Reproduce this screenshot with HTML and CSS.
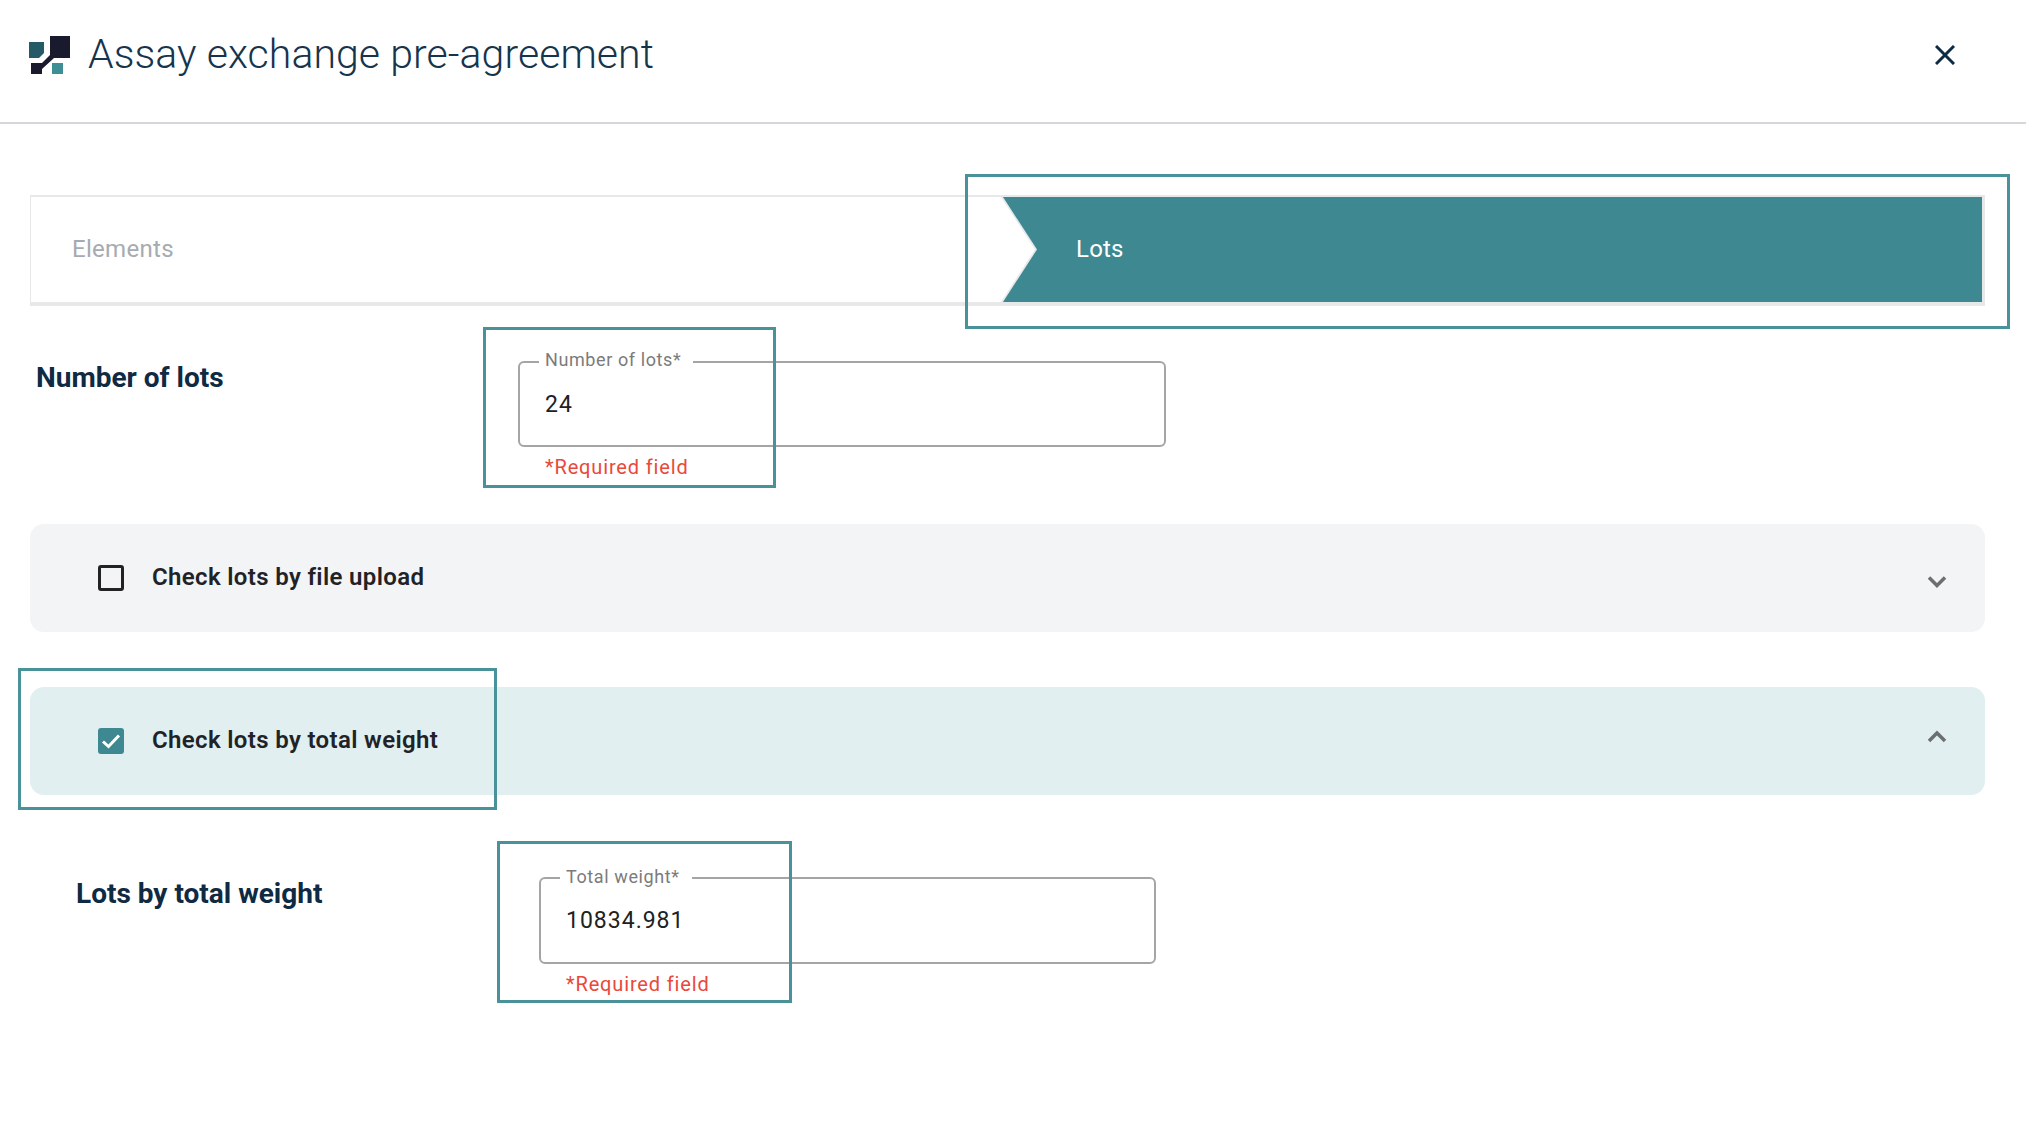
FILE: index.html
```html
<!DOCTYPE html>
<html lang="en">
<head>
<meta charset="utf-8">
<title>Assay exchange pre-agreement</title>
<link rel="stylesheet" href="styles.css">
</head>
<body>
<div class="page">
  <header class="header">
    <div class="brand">
      <svg class="logo" viewBox="0 0 41 38" width="41" height="38" aria-hidden="true">
        <path fill="#1a1a2e" d="M21 0H41V22H25L13 33V38H2V27H13L21 19Z"/>
        <path fill="#245b67" d="M0 6H15V17L10 22H0Z"/>
        <rect fill="#3e8e95" x="23" y="27" width="11" height="11"/>
      </svg>
      <h1 class="title">Assay exchange pre-agreement</h1>
    </div>
    <svg class="close" viewBox="0 0 20 20" width="20" height="20" aria-hidden="true">
      <path d="M1 1L19 19M19 1L1 19"/>
    </svg>
  </header>
  <main class="main">
    <div class="stepper">
      <div class="step">Elements</div>
      <div class="step step-active"><span class="step-text">Lots</span></div>
    </div>

    <section class="form-row form-row-lots">
      <h2 class="row-label">Number of lots</h2>
      <div class="field">
        <fieldset class="outline">
          <legend class="legend">Number of lots*</legend>
          <div class="value">24</div>
        </fieldset>
        <p class="error">*Required field</p>
      </div>
    </section>

    <div class="accordion">
      <span class="checkbox"></span>
      <span class="acc-title">Check lots by file upload</span>
      <svg class="chevron chevron-down" viewBox="0 0 20 14" width="20" height="14" aria-hidden="true"><path d="M2 2.5L10 10.5L18 2.5"/></svg>
    </div>

    <div class="accordion accordion-open">
      <span class="checkbox checkbox-on">
        <svg viewBox="0 0 26 26" width="26" height="26" aria-hidden="true"><path d="M5 13.5L10.5 18.5L21 7.5"/></svg>
      </span>
      <span class="acc-title">Check lots by total weight</span>
      <svg class="chevron chevron-up" viewBox="0 0 20 14" width="20" height="14" aria-hidden="true"><path d="M2 11L10 3L18 11"/></svg>
    </div>

    <section class="form-row form-row-weight">
      <h2 class="row-label">Lots by total weight</h2>
      <div class="field">
        <fieldset class="outline">
          <legend class="legend">Total weight*</legend>
          <div class="value">10834.981</div>
        </fieldset>
        <p class="error">*Required field</p>
      </div>
    </section>
  </main>

  <div class="mark mark-step"></div>
  <div class="mark mark-lots"></div>
  <div class="mark mark-check"></div>
  <div class="mark mark-weight"></div>
</div>
</body>
</html>
```
FILE: styles.css
```css
* { box-sizing: border-box; }
html, body { margin: 0; padding: 0; background: #fff; }
body { font-family: Roboto, "Liberation Sans", sans-serif; color: #0f2a43; }
.page { position: relative; width: 2026px; height: 1126px; overflow: hidden; }

.header {
  height: 124px;
  padding: 0 71px 12px 29px;
  border-bottom: 2px solid #d5d7da;
  display: flex;
  align-items: center;
  justify-content: space-between;
}
.brand { display: flex; align-items: center; gap: 18px; }
.logo { display: block; }
.title { margin: -2px 0 0; font-size: 41px; font-weight: 300; line-height: 48px; letter-spacing: 0.06px; color: #17344d; }
.close { display: block; }
.close path { fill: none; stroke: #0f2a43; stroke-width: 3; }

.main { padding: 71px 41px 0 30px; }

.stepper {
  height: 111px;
  display: flex;
  border-style: solid;
  border-color: #e6e8ea;
  border-width: 2px 3px 4px 1px;
}
.step {
  flex: 1 1 0;
  display: flex;
  align-items: center;
  padding: 0 0 2px 41px;
  font-size: 24px;
  letter-spacing: 0.3px;
  color: #a6abb1;
}
.step-active {
  position: relative;
  flex: 0 0 981px;
  padding-left: 75px;
  background: #e6e8ea;
  color: #fff;
  letter-spacing: 0.2px;
  clip-path: polygon(0 0, 100% 0, 100% 100%, 0 100%, 34px 50%);
}
.step-active::before {
  content: "";
  position: absolute;
  inset: 0 0 0 2px;
  background: #3e8891;
  clip-path: polygon(0 0, 100% 0, 100% 100%, 0 100%, 34px 50%);
}
.step-text { position: relative; }

.form-row { display: grid; align-items: start; }
.form-row-lots {
  margin-top: 44px;
  padding-left: 6px;
  grid-template-columns: 482px 648px;
}
.form-row-weight {
  margin-top: 72px;
  padding-left: 46px;
  grid-template-columns: 463px 617px;
}
.row-label {
  margin: 0;
  padding-top: 13px;
  font-size: 28px;
  line-height: 30px;
  font-weight: 700;
  color: #0f2a43;
}
.form-row-weight .row-label { padding-top: 12px; }

.outline {
  margin: 0;
  padding: 0 0 0 19px;
  height: 97px;
  border: 2px solid #a5a5a5;
  border-radius: 6px;
}
.legend {
  padding: 0 12px 4px 6px;
  font-size: 18px;
  line-height: 20px;
  letter-spacing: 0.6px;
  color: #7b7b7b;
}
.form-row-weight .legend { padding-bottom: 2px; }
.value {
  font-size: 23px;
  line-height: 26px;
  letter-spacing: 1px;
  color: #212121;
  padding: 18px 0 0 6px;
}
.form-row-weight .value { padding-top: 19px; }
.error {
  margin: 9px 0 0;
  padding-left: 27px;
  font-size: 20px;
  line-height: 22px;
  letter-spacing: 0.85px;
  color: #e8493a;
}

.accordion {
  height: 108px;
  margin-top: 46px;
  padding: 0 38px 0 68px;
  border-radius: 14px;
  background: #f3f4f6;
  display: flex;
  align-items: center;
  gap: 28px;
}
.accordion-open { margin-top: 55px; background: #e1eff0; }
.checkbox {
  flex: none;
  width: 26px;
  height: 26px;
  border: 3px solid #222;
  border-radius: 3px;
}
.checkbox-on {
  border: 0;
  background: #3e8891;
  display: block;
}
.checkbox-on svg { display: block; }
.checkbox-on path { fill: none; stroke: #fff; stroke-width: 3; }
.acc-title {
  flex: 1;
  font-size: 24px;
  font-weight: 600;
  line-height: 30px;
  letter-spacing: 0.35px;
  color: #1f2327;
  margin-top: -2px;
}
.chevron { flex: none; }
.chevron path { fill: none; stroke: #6b6f70; stroke-width: 3.5; }
.chevron-down { margin-top: 8px; }
.chevron-up { margin-top: -8px; }

.mark { position: absolute; border: 3px solid #4a9299; pointer-events: none; }
.mark-step { left: 965px; top: 174px; width: 1045px; height: 155px; }
.mark-lots { left: 483px; top: 327px; width: 293px; height: 161px; }
.mark-check { left: 18px; top: 668px; width: 479px; height: 142px; }
.mark-weight { left: 497px; top: 841px; width: 295px; height: 162px; }
```
